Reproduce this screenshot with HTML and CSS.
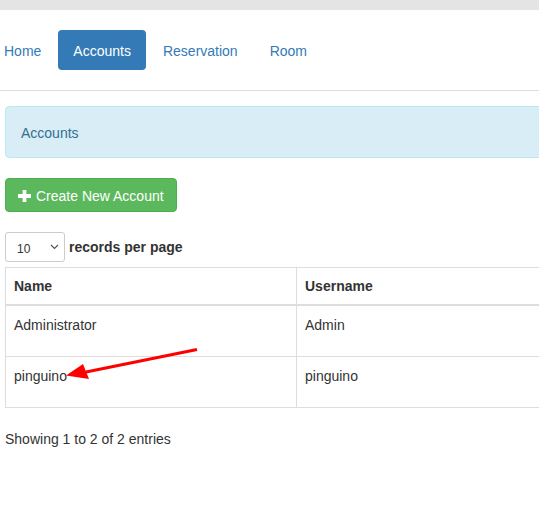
FILE: index.html
```html
<!DOCTYPE html>
<html>
<head>
<meta charset="utf-8">
<link rel="stylesheet" href="styles.css">
</head>
<body>
<div class="topbar"></div>
<nav class="navwrap">
  <ul class="pills">
    <li><a href="#">Home</a></li>
    <li class="active"><a href="#">Accounts</a></li>
    <li><a href="#">Reservation</a></li>
    <li><a href="#">Room</a></li>
  </ul>
</nav>
<main class="page">
  <div class="alert">Accounts</div>
  <button class="btn-success" type="button">
    <svg class="plus" width="13" height="12" viewBox="0 0 13 12"><path d="M4.6 0h3.8v4.1H13v3.8H8.4V12H4.6V7.9H0V4.1h4.6z" fill="#fff"/></svg>Create New Account
  </button>
  <div class="length">
    <div class="select"><span>10</span><svg width="9" height="6" viewBox="0 0 9 6"><path d="M1 1l3.5 3.5L8 1" fill="none" stroke="#555" stroke-width="1.2"/></svg></div>
    <span class="lbl">records per page</span>
  </div>
  <table class="table">
    <thead>
      <tr><th class="c1">Name</th><th>Username</th></tr>
    </thead>
    <tbody>
      <tr><td class="c1">Administrator</td><td>Admin</td></tr>
      <tr><td class="c1">pinguino</td><td>pinguino</td></tr>
    </tbody>
  </table>
  <div class="info">Showing 1 to 2 of 2 entries</div>
</main>
<svg class="arrow" width="539" height="507" viewBox="0 0 539 507">
  <path d="M197 349.5L86 372" stroke="#f00" stroke-width="3" fill="none"/>
  <path d="M66 375.5L83 364L89 379z" fill="#f00"/>
</svg>
</body>
</html>
```
FILE: styles.css
```css
html, body {
  margin: 0;
  padding: 0;
  background: #fff;
  overflow: hidden;
}
body {
  font-family: "Liberation Sans", Arial, sans-serif;
  font-size: 14px;
  line-height: 20px;
  color: #333;
  width: 539px;
  height: 507px;
  position: relative;
}
.topbar {
  height: 10px;
  background: #e4e4e4;
}
.navwrap {
  padding: 20px 0 20px;
  border-bottom: 1px solid #ddd;
  width: 760px;
}
.pills {
  list-style: none;
  margin: 0 0 0 -11px;
  padding: 0;
  display: flex;
  gap: 2px;
}
.pills a {
  display: block;
  padding: 11px 15px 9px;
  color: #337ab7;
  text-decoration: none;
  border-radius: 4px;
}
.pills .active a {
  background: #337ab7;
  color: #fff;
}
.page {
  padding: 15px 0 0 5px;
  width: 760px;
}
.alert {
  background: #d9edf7;
  border: 1px solid #bce8f1;
  color: #31708f;
  border-radius: 4px;
  padding: 16px 15px 14px;
  margin-bottom: 20px;
}
.btn-success {
  display: flex;
  align-items: center;
  height: 34px;
  box-sizing: border-box;
  padding: 7px 12px 5px;
  background: #5cb85c;
  border: 1px solid #4cae4c;
  border-radius: 4px;
  color: #fff;
  font-family: inherit;
  font-size: 14px;
  line-height: 20px;
  margin: 0 0 20px;
}
.plus {
  margin-right: 5px;
  margin-top: -1px;
}
.length {
  display: flex;
  align-items: center;
  height: 30px;
  margin-bottom: 5px;
}
.select {
  box-sizing: border-box;
  width: 60px;
  height: 30px;
  border: 1px solid #ccc;
  border-radius: 3px;
  display: flex;
  align-items: center;
  justify-content: space-between;
  padding: 0 5px 0 11px;
  font-size: 12px;
  color: #333;
  margin-right: 4px;
}
.select span {
  margin-top: 3px;
}
.lbl {
  font-weight: bold;
}
.table {
  border-collapse: collapse;
  width: 700px;
  border: 1px solid #ddd;
}
.table th, .table td {
  text-align: left;
  padding: 8px;
  vertical-align: top;
  border: 1px solid #ddd;
}
.table th {
  border-bottom: 2px solid #ddd;
}
.table td {
  height: 34px;
  padding: 9px 8px 7px;
}
.table .c1 {
  width: 274px;
}
.info {
  padding-top: 21px;
}
.arrow {
  position: absolute;
  left: 0;
  top: 0;
  pointer-events: none;
}
```
